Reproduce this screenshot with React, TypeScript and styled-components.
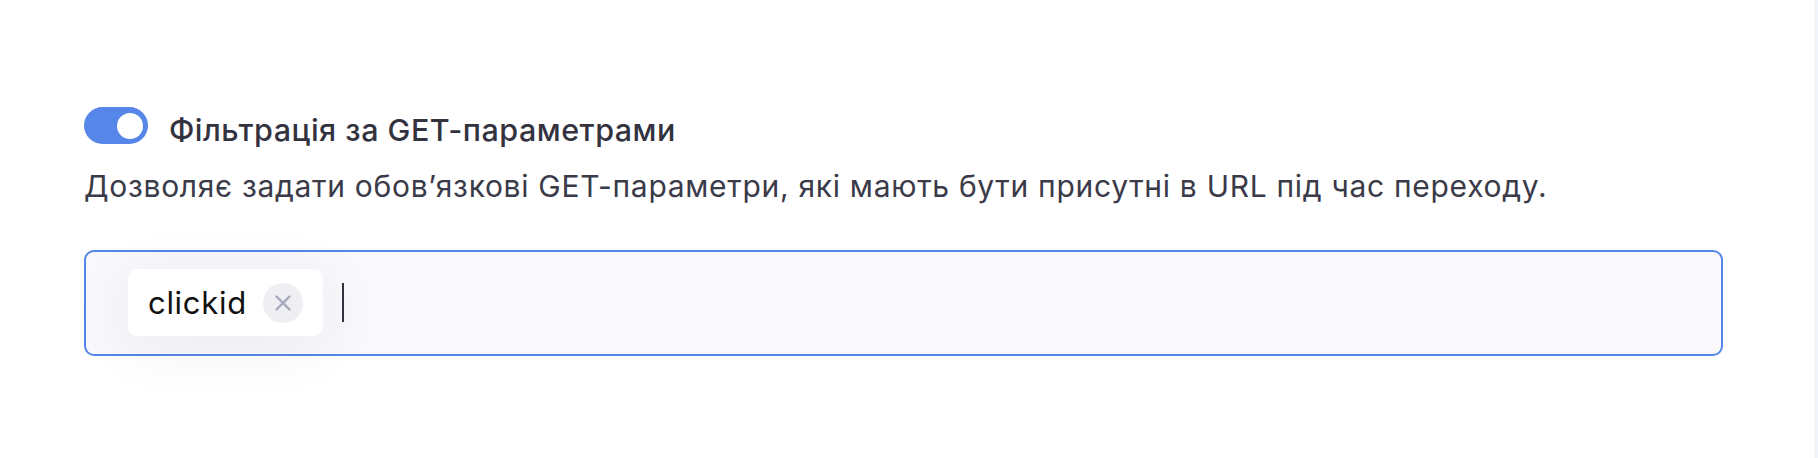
import React from "react";
import styled, { createGlobalStyle } from "styled-components";

const GlobalStyle = createGlobalStyle`
  * {
    box-sizing: border-box;
  }
  body {
    margin: 0;
    background: #f4f5fa;
    font-family: Inter, "Open Sans", "Noto Sans", sans-serif;
  }
`;

const Page = styled.div`
  display: flex;
  height: 458px;
`;

const Card = styled.section`
  width: 1814px;
  height: 458px;
  background: #ffffff;
  padding: 107px 91px 0 84px;
`;

const HeaderRow = styled.div`
  display: flex;
  align-items: flex-start;
  gap: 21px;
`;

const Toggle = styled.button<{ $on: boolean }>`
  width: 64px;
  height: 37px;
  border: none;
  border-radius: 19px;
  padding: 0 5px;
  display: flex;
  align-items: center;
  justify-content: ${({ $on }) => ($on ? "flex-end" : "flex-start")};
  background: ${({ $on }) => ($on ? "#5586e8" : "#d7d9e2")};
  cursor: pointer;

  span {
    width: 26px;
    height: 26px;
    border-radius: 50%;
    background: #ffffff;
  }
`;

const Title = styled.h3`
  margin: 8px 0 0;
  font-size: 30.5px;
  line-height: 1;
  font-weight: 500;
  color: #33333f;
  letter-spacing: 0.5px;
`;

const Description = styled.p`
  margin: 25px 0 0;
  font-size: 30px;
  line-height: 1;
  font-weight: 400;
  color: #3a3a48;
  letter-spacing: 0.7px;
`;

const TagInput = styled.div`
  margin-top: 49px;
  width: 1639px;
  height: 106px;
  border: 2px solid #5586e8;
  border-radius: 10px;
  background: #f9f9fc;
  padding-left: 42px;
  display: flex;
  align-items: center;
`;

const Chip = styled.div`
  height: 67px;
  display: flex;
  align-items: center;
  gap: 16px;
  padding: 0 20px;
  background: #ffffff;
  border-radius: 9px;
  box-shadow: 0 10px 60px rgba(40, 40, 80, 0.07);
  font-size: 31px;
  letter-spacing: 0.7px;
  color: #111111;
`;

const RemoveButton = styled.button`
  width: 40px;
  height: 40px;
  border: none;
  border-radius: 50%;
  background: #efeff3;
  padding: 0;
  display: flex;
  align-items: center;
  justify-content: center;
  cursor: pointer;
`;

const Caret = styled.span`
  width: 2px;
  height: 39px;
  margin-left: 19px;
  background: #33333f;
`;

export default function App() {
  return (
    <>
      <GlobalStyle />
      <Page>
        <Card>
          <HeaderRow>
            <Toggle $on>
              <span />
            </Toggle>
            <Title>Фільтрація за GET-параметрами</Title>
          </HeaderRow>
          <Description>
            Дозволяє задати обов’язкові GET-параметри, які мають бути присутні в URL під час переходу.
          </Description>
          <TagInput>
            <Chip>
              clickid
              <RemoveButton aria-label="remove">
                <svg width="18" height="18" viewBox="0 0 18 18">
                  <path d="M2.5 2.5L15.5 15.5M15.5 2.5L2.5 15.5" stroke="#a6a9ba" strokeWidth="2.4" strokeLinecap="round" />
                </svg>
              </RemoveButton>
            </Chip>
            <Caret />
          </TagInput>
        </Card>
      </Page>
    </>
  );
}
